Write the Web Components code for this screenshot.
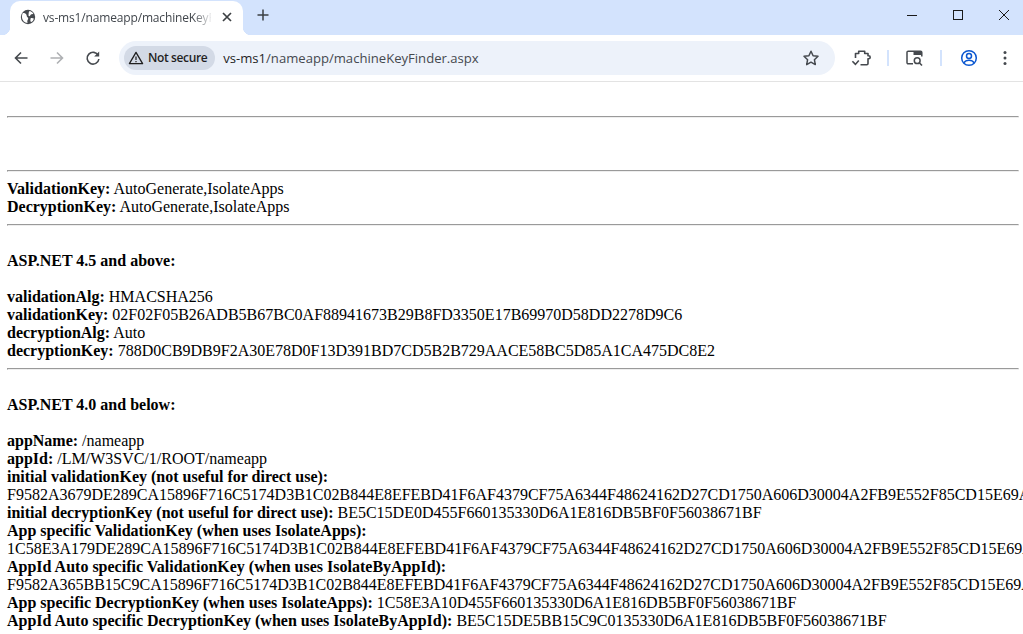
<!DOCTYPE html>
<html lang="en">
<head>
<meta charset="utf-8">
<title>vs-ms1/nameapp/machineKeyFinder.aspx</title>
<style>
  html, body { margin: 0; height: 100%; overflow: hidden; background: #fff; }
</style>
</head>
<body>

<browser-window>
  <browser-tabstrip title-text="vs-ms1/nameapp/machineKeyFinder.aspx"></browser-tabstrip>
  <browser-toolbar url-host="vs-ms1" url-path="/nameapp/machineKeyFinder.aspx"></browser-toolbar>
  <key-page>
    <key-block top></key-block>
    <hr>
    <key-block blank="2"></key-block>
    <hr>
    <key-block>
      <b>ValidationKey:</b> AutoGenerate,IsolateApps<br>
      <b>DecryptionKey:</b> AutoGenerate,IsolateApps
    </key-block>
    <hr>
    <key-block>
      <br>
      <b>ASP.NET 4.5 and above:</b><br>
      <br>
      <b>validationAlg:</b> HMACSHA256<br>
      <b>validationKey:</b> 02F02F05B26ADB5B67BC0AF88941673B29B8FD3350E17B69970D58DD2278D9C6<br>
      <b>decryptionAlg:</b> Auto<br>
      <b>decryptionKey:</b> 788D0CB9DB9F2A30E78D0F13D391BD7CD5B2B729AACE58BC5D85A1CA475DC8E2
    </key-block>
    <hr>
    <key-block>
      <br>
      <b>ASP.NET 4.0 and below:</b><br>
      <br>
      <b>appName:</b> /nameapp<br>
      <b>appId:</b> /LM/W3SVC/1/ROOT/nameapp<br>
      <b>initial validationKey (not useful for direct use):</b> F9582A3679DE289CA15896F716C5174D3B1C02B844E8EFEBD41F6AF4379CF75A6344F48624162D27CD1750A606D30004A2FB9E552F85CD15E69A0C3E<br>
      <b>initial decryptionKey (not useful for direct use):</b> BE5C15DE0D455F660135330D6A1E816DB5BF0F56038671BF<br>
      <b>App specific ValidationKey (when uses IsolateApps):</b> 1C58E3A179DE289CA15896F716C5174D3B1C02B844E8EFEBD41F6AF4379CF75A6344F48624162D27CD1750A606D30004A2FB9E552F85CD15E69A0C3E<br>
      <b>AppId Auto specific ValidationKey (when uses IsolateByAppId):</b> F9582A365BB15C9CA15896F716C5174D3B1C02B844E8EFEBD41F6AF4379CF75A6344F48624162D27CD1750A606D30004A2FB9E552F85CD15E69A0C3E<br>
      <b>App specific DecryptionKey (when uses IsolateApps):</b> 1C58E3A10D455F660135330D6A1E816DB5BF0F56038671BF<br>
      <b>AppId Auto specific DecryptionKey (when uses IsolateByAppId):</b> BE5C15DE5BB15C9C0135330D6A1E816DB5BF0F56038671BF
    </key-block>
  </key-page>
</browser-window>

<script>
// Ventana completa: pestañas, barra y contenido en columna
class BrowserWindow extends HTMLElement {
  constructor() {
    super();
    this.attachShadow({ mode: 'open' });
    this.shadowRoot.innerHTML = `
      <style>
        :host {
          display: flex;
          flex-direction: column;
          width: 100%;
          height: 100vh;
          overflow: hidden;
          background: #fff;
        }
      </style>
      <slot></slot>
    `;
  }
}

// Tira de pestañas con los controles de ventana
class BrowserTabstrip extends HTMLElement {
  constructor() {
    super();
    this.attachShadow({ mode: 'open' });
  }

  connectedCallback() {
    const title = this.getAttribute('title-text') || '';
    this.shadowRoot.innerHTML = `
      <style>
        :host {
          display: flex;
          flex: none;
          height: 35px;
          background: #d3e3fd;
          font-family: "Open Sans", "Noto Sans", sans-serif;
        }
        .tab {
          position: relative;
          display: flex;
          align-items: center;
          box-sizing: border-box;
          width: 233px;
          height: 34px;
          margin: 1px 0 0 10px;
          padding: 0 8px 2px 10px;
          background: #fff;
          border-radius: 10px 10px 0 0;
        }
        .tab::before, .tab::after {
          content: "";
          position: absolute;
          bottom: 0;
          width: 8px;
          height: 8px;
        }
        .tab::before {
          left: -8px;
          background: radial-gradient(circle at 0 0, transparent 8px, #fff 8.5px);
        }
        .tab::after {
          right: -8px;
          background: radial-gradient(circle at 100% 0, transparent 8px, #fff 8.5px);
        }
        .globe { flex: none; width: 16px; height: 16px; }
        .title {
          flex: 1;
          min-width: 0;
          margin-left: 7px;
          overflow: hidden;
          white-space: nowrap;
          font-size: 12px;
          letter-spacing: -0.16px;
          color: #41464c;
          -webkit-mask-image: linear-gradient(90deg, #000 150px, transparent 170px);
          mask-image: linear-gradient(90deg, #000 150px, transparent 170px);
        }
        .close { flex: none; width: 16px; height: 16px; margin-left: 8px; }
        .plus {
          flex: none;
          width: 16px;
          height: 16px;
          margin: 7px 0 0 12px;
        }
        .spacer { flex: 1; }
        .win {
          flex: none;
          width: 46px;
          display: flex;
          align-items: center;
          justify-content: center;
          padding-bottom: 5px;
          box-sizing: border-box;
        }
        .win:last-child { margin-right: -4px; }
        .win svg { width: 12px; height: 12px; }
      </style>
      <div class="tab">
        <svg class="globe" viewBox="0 0 16 16">
          <circle cx="8" cy="8" r="7.2" fill="#45494e"/>
          <path d="M2.6 4.2c1.6-.3 3 .3 3.7 1.4.6 1 .1 1.7.9 2.3.8.5 1.2 1 .9 2-.2.9-.8 1.300-.8 2.400 0 .7.100 1.300.300 1.800A6.300 6.300 0 0 1 1.900 8c0-1.400.3-2.700.7-3.800z" fill="#fff"/>
          <path d="M9.200 1.900c1.900.3 3.400 1.400 4.200 2.900-.9.500-1.900.300-2.700.900-.7.500-.5 1.500-1.300 1.500-.8 0-1.200-1-.8-1.900.4-.8-.2-1.100.1-1.900.1-.2.300-.4.500-.5z" fill="#fff"/>
          <path d="M11 9c1-.3 2.200 0 2.800.400-.3 1.700-1.200 2.900-2.600 3.700-.7-.5-.9-1.300-.8-2.200.1-.8.100-1.700.6-1.900z" fill="#fff"/>
        </svg>
        <div class="title">${title}</div>
        <svg class="close" viewBox="0 0 16 16"><path d="M4 4l8 8M12 4l-8 8" stroke="#3c4043" stroke-width="1.700" fill="none"/></svg>
      </div>
      <svg class="plus" viewBox="0 0 16 16"><path d="M8 2.500v11M2.500 8h11" stroke="#3c4043" stroke-width="1.500" fill="none"/></svg>
      <div class="spacer"></div>
      <div class="win"><svg viewBox="0 0 12 12"><path d="M1 6.500h10" stroke="#1a1a1a" fill="none"/></svg></div>
      <div class="win"><svg viewBox="0 0 12 12"><rect x="1.500" y="1.500" width="9" height="9" stroke="#1a1a1a" fill="none"/></svg></div>
      <div class="win"><svg viewBox="0 0 12 12"><path d="M1 1l10 10M11 1L1 11" stroke="#1a1a1a" fill="none"/></svg></div>
    `;
  }
}

// Barra de navegación con el omnibox y los iconos
class BrowserToolbar extends HTMLElement {
  constructor() {
    super();
    this.attachShadow({ mode: 'open' });
  }

  connectedCallback() {
    const host = this.getAttribute('url-host') || '';
    const path = this.getAttribute('url-path') || '';
    this.shadowRoot.innerHTML = `
      <style>
        :host {
          display: flex;
          flex: none;
          align-items: center;
          box-sizing: border-box;
          height: 47px;
          padding: 0 0 1px 3px;
          background: #fff;
          border-bottom: 1px solid #e3e3e3;
          font-family: "Open Sans", "Noto Sans", sans-serif;
        }
        .btn {
          flex: none;
          width: 36px;
          height: 36px;
          display: flex;
          align-items: center;
          justify-content: center;
        }
        svg { width: 20px; height: 20px; display: block; }
        .omni {
          flex: 1;
          min-width: 0;
          display: flex;
          align-items: center;
          height: 34px;
          margin: 0 8px;
          padding: 0 6px 0 5px;
          background: #edf2fa;
          border-radius: 17px;
        }
        .chip {
          flex: none;
          display: flex;
          align-items: center;
          gap: 4px;
          box-sizing: border-box;
          height: 24px;
          padding: 0 8px 0 4px;
          background: #d3dae6;
          border-radius: 12px;
          font-size: 12px;
          font-weight: 600;
          letter-spacing: -0.38px;
          color: #1f1f1f;
        }
        .chip svg { width: 16px; height: 16px; }
        .url {
          flex: 1;
          margin-left: 8px;
          font-size: 13.1px;
          white-space: nowrap;
          color: #45494e;
        }
        .url span { color: #1f1f1f; }
        .star { flex: none; width: 24px; display: flex; justify-content: center; margin-right: 6px; }
        .sep { flex: none; width: 2px; height: 16px; background: #d3e3fd; }
        .sep.a { margin: 0 7px 0 8px; }
        .sep.b { margin: 0 9px 0 8px; }
      </style>
      <div class="btn"><svg viewBox="0 0 20 20"><path d="M16.500 10H4.500M10 4.500L4.500 10l5.500 5.500" stroke="#45494e" stroke-width="1.600" fill="none"/></svg></div>
      <div class="btn"><svg viewBox="0 0 20 20"><path d="M3.500 10h12M10 4.500l5.500 5.500-5.500 5.500" stroke="#aeb0b3" stroke-width="1.600" fill="none"/></svg></div>
      <div class="btn"><svg viewBox="0 0 20 20"><path d="M15.300 7.500A5.900 5.900 0 1 0 15.900 11" stroke="#45494e" stroke-width="1.600" fill="none"/><path d="M16.200 3.500v5h-5z" fill="#45494e"/></svg></div>
      <div class="omni">
        <div class="chip">
          <svg viewBox="0 0 16 16"><path d="M8 2.400L14.600 13.600H1.400z" stroke="#1f1f1f" stroke-width="1.300" fill="none" stroke-linejoin="round"/><path d="M8 6.500v3.600M8 11v1.300" stroke="#1f1f1f" stroke-width="1.200" fill="none"/></svg>
          Not secure
        </div>
        <div class="url"><span>${host}</span>${path}</div>
        <div class="star"><svg viewBox="0 0 20 20"><path d="M10 3.200l2.100 4.500 4.900.6-3.600 3.400.9 4.900L10 14.200l-4.300 2.400.9-4.900L3 8.300l4.900-.6z" stroke="#45494e" stroke-width="1.500" fill="none" stroke-linejoin="round"/></svg></div>
      </div>
      <div class="btn"><svg viewBox="0 0 20 20"><path d="M4.500 10V5.500h3.200V3.200h6v2.300H17v2.300h.7a1.500 1.500 0 0 1 0 3H17v4.700c0 .7-.5 1.200-1.200 1.200H9.500" stroke="#45494e" stroke-width="1.600" fill="none" stroke-linejoin="round"/><path d="M1.400 13.200l3 3.200 3.400-4" stroke="#45494e" stroke-width="1.600" fill="none"/></svg></div>
      <div class="sep a"></div>
      <div class="btn"><svg viewBox="0 0 20 20"><path d="M9 15.800H4.200c-.7 0-1.200-.5-1.200-1.200V4.400c0-.7.500-1.200 1.200-1.200h12.400c.7 0 1.200.5 1.200 1.200v4" stroke="#45494e" stroke-width="1.500" fill="none"/><path d="M9.500 3h8.500v4H9.500z" fill="#45494e"/><circle cx="13.200" cy="12.700" r="2.900" stroke="#45494e" stroke-width="1.500" fill="none"/><path d="M15.300 14.800l2.700 2.700" stroke="#45494e" stroke-width="1.600"/></svg></div>
      <div class="sep b"></div>
      <div class="btn"><svg viewBox="0 0 20 20"><circle cx="10" cy="10" r="7.300" stroke="#0b57d0" stroke-width="1.500" fill="none"/><circle cx="10" cy="8" r="2.500" stroke="#0b57d0" stroke-width="1.500" fill="none"/><path d="M4.800 14.800c1.300-2 3.200-2.600 5.200-2.600s3.900.6 5.200 2.600" stroke="#0b57d0" stroke-width="1.500" fill="none"/></svg></div>
      <div class="btn"><svg viewBox="0 0 20 20"><circle cx="10" cy="4.500" r="1.500" fill="#45494e"/><circle cx="10" cy="10" r="1.500" fill="#45494e"/><circle cx="10" cy="15.500" r="1.500" fill="#45494e"/></svg></div>
    `;
  }
}

// Área del documento: sangría de la página servida
class KeyPage extends HTMLElement {
  constructor() {
    super();
    this.attachShadow({ mode: 'open' });
    this.shadowRoot.innerHTML = `
      <style>
        :host {
          display: block;
          flex: 1;
          min-height: 0;
          overflow: hidden;
          padding: 8px 4px 0 7px;
          font: 16px/18px "Liberation Serif", "Times New Roman", serif;
          color: #000;
        }
      </style>
      <slot></slot>
    `;
  }
}

// Bloque de texto entre dos reglas; "blank" reserva líneas vacías
class KeyBlock extends HTMLElement {
  constructor() {
    super();
    this.attachShadow({ mode: 'open' });
    this.shadowRoot.innerHTML = `
      <style>
        :host { display: block; }
        .gap { height: calc(var(--blank, 0) * 18px); }
      </style>
      <div class="gap"></div>
      <slot></slot>
    `;
  }

  connectedCallback() {
    const blank = this.hasAttribute('top') ? 1 : Number(this.getAttribute('blank') || 0);
    this.style.setProperty('--blank', blank);
  }
}

customElements.define('browser-window', BrowserWindow);
customElements.define('browser-tabstrip', BrowserTabstrip);
customElements.define('browser-toolbar', BrowserToolbar);
customElements.define('key-page', KeyPage);
customElements.define('key-block', KeyBlock);
</script>
</body>
</html>
